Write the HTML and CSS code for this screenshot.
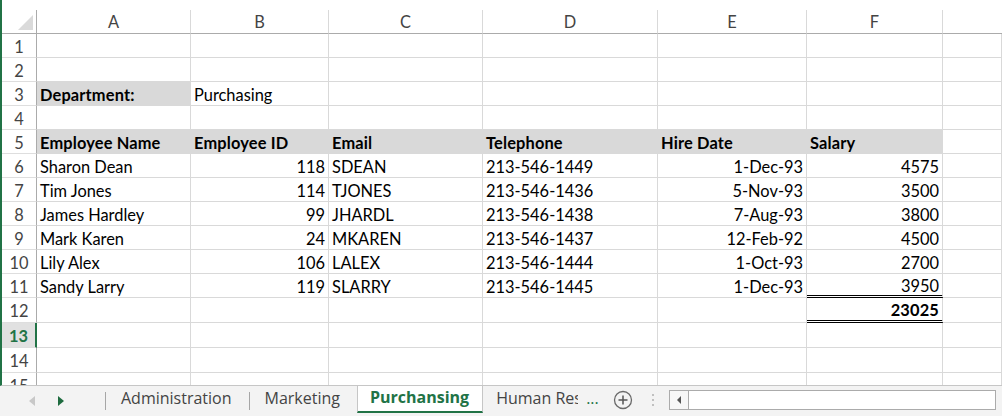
FILE: index.html
```html
<!DOCTYPE html>
<html>
<head>
<meta charset="utf-8">
<link rel="stylesheet" href="styles.css">
</head>
<body>
<div class="app">
  <div class="sheet">
    <div class="grid">
      <div class="ch corner"><span class="tri"></span></div>
      <div class="ch">A</div><div class="ch">B</div><div class="ch">C</div><div class="ch">D</div><div class="ch">E</div><div class="ch">F</div><div class="ch last"></div>

      <div class="rh">1</div><div class="c"></div><div class="c"></div><div class="c"></div><div class="c"></div><div class="c"></div><div class="c"></div><div class="c"></div>
      <div class="rh">2</div><div class="c"></div><div class="c"></div><div class="c"></div><div class="c"></div><div class="c"></div><div class="c"></div><div class="c"></div>
      <div class="rh">3</div><div class="c fill b">Department:</div><div class="c">Purchasing</div><div class="c"></div><div class="c"></div><div class="c"></div><div class="c"></div><div class="c"></div>
      <div class="rh">4</div><div class="c"></div><div class="c"></div><div class="c"></div><div class="c"></div><div class="c"></div><div class="c"></div><div class="c"></div>
      <div class="rh">5</div><div class="c fill b">Employee Name</div><div class="c fill b">Employee ID</div><div class="c fill b">Email</div><div class="c fill b">Telephone</div><div class="c fill b">Hire Date</div><div class="c fill b">Salary</div><div class="c"></div>
      <div class="rh">6</div><div class="c">Sharon Dean</div><div class="c r">118</div><div class="c">SDEAN</div><div class="c">213-546-1449</div><div class="c r">1-Dec-93</div><div class="c r">4575</div><div class="c"></div>
      <div class="rh">7</div><div class="c">Tim Jones</div><div class="c r">114</div><div class="c">TJONES</div><div class="c">213-546-1436</div><div class="c r">5-Nov-93</div><div class="c r">3500</div><div class="c"></div>
      <div class="rh">8</div><div class="c">James Hardley</div><div class="c r">99</div><div class="c">JHARDL</div><div class="c">213-546-1438</div><div class="c r">7-Aug-93</div><div class="c r">3800</div><div class="c"></div>
      <div class="rh">9</div><div class="c">Mark Karen</div><div class="c r">24</div><div class="c">MKAREN</div><div class="c">213-546-1437</div><div class="c r">12-Feb-92</div><div class="c r">4500</div><div class="c"></div>
      <div class="rh">10</div><div class="c">Lily Alex</div><div class="c r">106</div><div class="c">LALEX</div><div class="c">213-546-1444</div><div class="c r">1-Oct-93</div><div class="c r">2700</div><div class="c"></div>
      <div class="rh">11</div><div class="c">Sandy Larry</div><div class="c r">119</div><div class="c">SLARRY</div><div class="c">213-546-1445</div><div class="c r">1-Dec-93</div><div class="c r dbl">3950</div><div class="c"></div>
      <div class="rh t">12</div><div class="c t"></div><div class="c t"></div><div class="c t"></div><div class="c t"></div><div class="c t"></div><div class="c t r b dbl">23025</div><div class="c t"></div>
      <div class="rh t sel">13</div><div class="c t"></div><div class="c t"></div><div class="c t"></div><div class="c t"></div><div class="c t"></div><div class="c t"></div><div class="c t"></div>
      <div class="rh t">14</div><div class="c t"></div><div class="c t"></div><div class="c t"></div><div class="c t"></div><div class="c t"></div><div class="c t"></div><div class="c t"></div>
      <div class="rh t">15</div><div class="c t"></div><div class="c t"></div><div class="c t"></div><div class="c t"></div><div class="c t"></div><div class="c t"></div><div class="c t"></div>
    </div>
  </div>
  <div class="tabbar">
    <div class="nav">
      <span class="arr prev"></span>
      <span class="arr next"></span>
    </div>
    <div class="tabs">
      <span class="tab">Administration</span>
      <span class="tab">Marketing</span>
      <span class="tab active">Purchansing</span>
      <span class="tab more"><span class="clip">Human Res</span><span class="dots">...</span></span>
    </div>
    <svg class="add" width="20" height="20" viewBox="0 0 20 20"><circle cx="10" cy="10" r="8.5" fill="none" stroke="#6a6a6a" stroke-width="1.3"/><path d="M10 5.5v9M5.5 10h9" stroke="#555" stroke-width="1.5"/></svg>
    <span class="vdots"></span>
    <div class="scroll">
      <span class="sbtn"><span class="ltri"></span></span>
      <span class="strack"></span>
    </div>
  </div>
</div>
</body>
</html>
```

FILE: styles.css
```css
html, body {
  margin: 0;
  padding: 0;
  background: #fff;
}
body {
  width: 1002px;
  height: 416px;
  overflow: hidden;
  font-family: Lato, "Liberation Sans", sans-serif;
  color: #000;
}
.app {
  display: flex;
  flex-direction: column;
  height: 416px;
}
.sheet {
  height: 387px;
  box-sizing: border-box;
  padding-top: 10px;
  border-left: 2px solid #217346;
  overflow: hidden;
  border-bottom: 1px solid #c6c6c6;
}
.grid {
  display: grid;
  grid-template-columns: 35px 154px 138px 154px 175px 149px 136px 1fr;
  grid-template-rows: 24px repeat(11, 24px) repeat(4, 25px);
}
.grid > div {
  box-sizing: border-box;
  border-right: 1px solid #d9d9d9;
  border-bottom: 1px solid #d9d9d9;
  font-size: 16.4px;
  white-space: nowrap;
  overflow: hidden;
  display: flex;
  align-items: center;
}
.ch {
  justify-content: center;
  color: #444;
  border-bottom: 1px solid #ababab !important;
  font-size: 16px;
  padding-bottom: 1px;
}
.ch.last { border-right: none !important; }
.corner {
  position: relative;
  border-right: 1px solid #ababab !important;
}
.tri {
  position: absolute;
  right: 3px;
  bottom: 3px;
  width: 0;
  height: 0;
  border-left: 15px solid transparent;
  border-bottom: 15px solid #dadada;
}
.rh {
  justify-content: center;
  color: #444;
  border-right: 1px solid #ababab !important;
  border-bottom: 1px solid #dedede !important;
  padding-top: 1px;
}
.rh.sel {
  background: #e1e1e1;
  color: #217346;
  font-weight: bold;
  border-right: 2px solid #217346 !important;
}
.c {
  padding: 1px 4px 0 3px;
}
.c.r { justify-content: flex-end; padding-right: 3px; }
.c.b { font-weight: bold; letter-spacing: 0.15px; }
.c.fill {
  background: #d9d9d9;
  border-color: #d9d9d9 !important;
}
.c.dbl { border-bottom: 3px double #000 !important; }

.tabbar {
  flex: 1;
  background: #f3f3f3;
  display: flex;
  align-items: stretch;
  font-family: "Open Sans", "Noto Sans", sans-serif;
  font-size: 16px;
  color: #444;
}
.nav {
  width: 105px;
  box-sizing: border-box;
  display: flex;
  align-items: center;
}
.arr {
  width: 0; height: 0;
  border-top: 5px solid transparent;
  border-bottom: 5px solid transparent;
}
.prev {
  margin-left: 29px;
  border-right: 6px solid #c8c8c8;
}
.next {
  margin-left: 23px;
  border-left: 6px solid #1e6b3f;
}
.tabs {
  display: flex;
  align-items: stretch;
}
.tab {
  display: flex;
  align-items: center;
  padding: 0 17px 6px 16px;
  position: relative;
}
.tab::before {
  content: "";
  position: absolute;
  left: 0;
  top: 6px;
  height: 18px;
  border-left: 1px solid #a6a6a6;
}
.tab.active {
  background: #fff;
  color: #217346;
  font-weight: bold;
  padding: 0 13px 3px 12px;
  border-left: 1px solid #c6c6c6;
  border-right: 1px solid #c6c6c6;
  border-bottom: 2px solid #217346;
  margin-bottom: 3px;
}
.tab.active::before, .tab.active + .tab::before { display: none; }
.tab.more { padding: 0 0 6px 13px; }
.clip { display: inline-block; width: 82px; overflow: hidden; white-space: nowrap; }
.dots { color: #217346; margin-left: 8px; }
.add { align-self: center; margin-left: 14px; margin-top: -2px; }
.vdots {
  align-self: center;
  margin-left: 19px;
  width: 2px;
  height: 12px;
  margin-top: -2px;
  background: repeating-linear-gradient(#c0c0c0 0 2px, transparent 2px 5px);
}
.scroll {
  align-self: center;
  margin-left: 15px;
  width: 327px;
  height: 20px;
  box-sizing: border-box;
  border: 1px solid #ababab;
  background: #fff;
  display: flex;
  margin-top: -2px;
}
.sbtn {
  width: 18px;
  border-right: 1px solid #ababab;
  display: flex;
  align-items: center;
  justify-content: center;
  background: #f7f7f7;
}
.ltri {
  width: 0; height: 0;
  border-top: 4px solid transparent;
  border-bottom: 4px solid transparent;
  border-right: 4px solid #555;
}
.strack { flex: 1; }
```
